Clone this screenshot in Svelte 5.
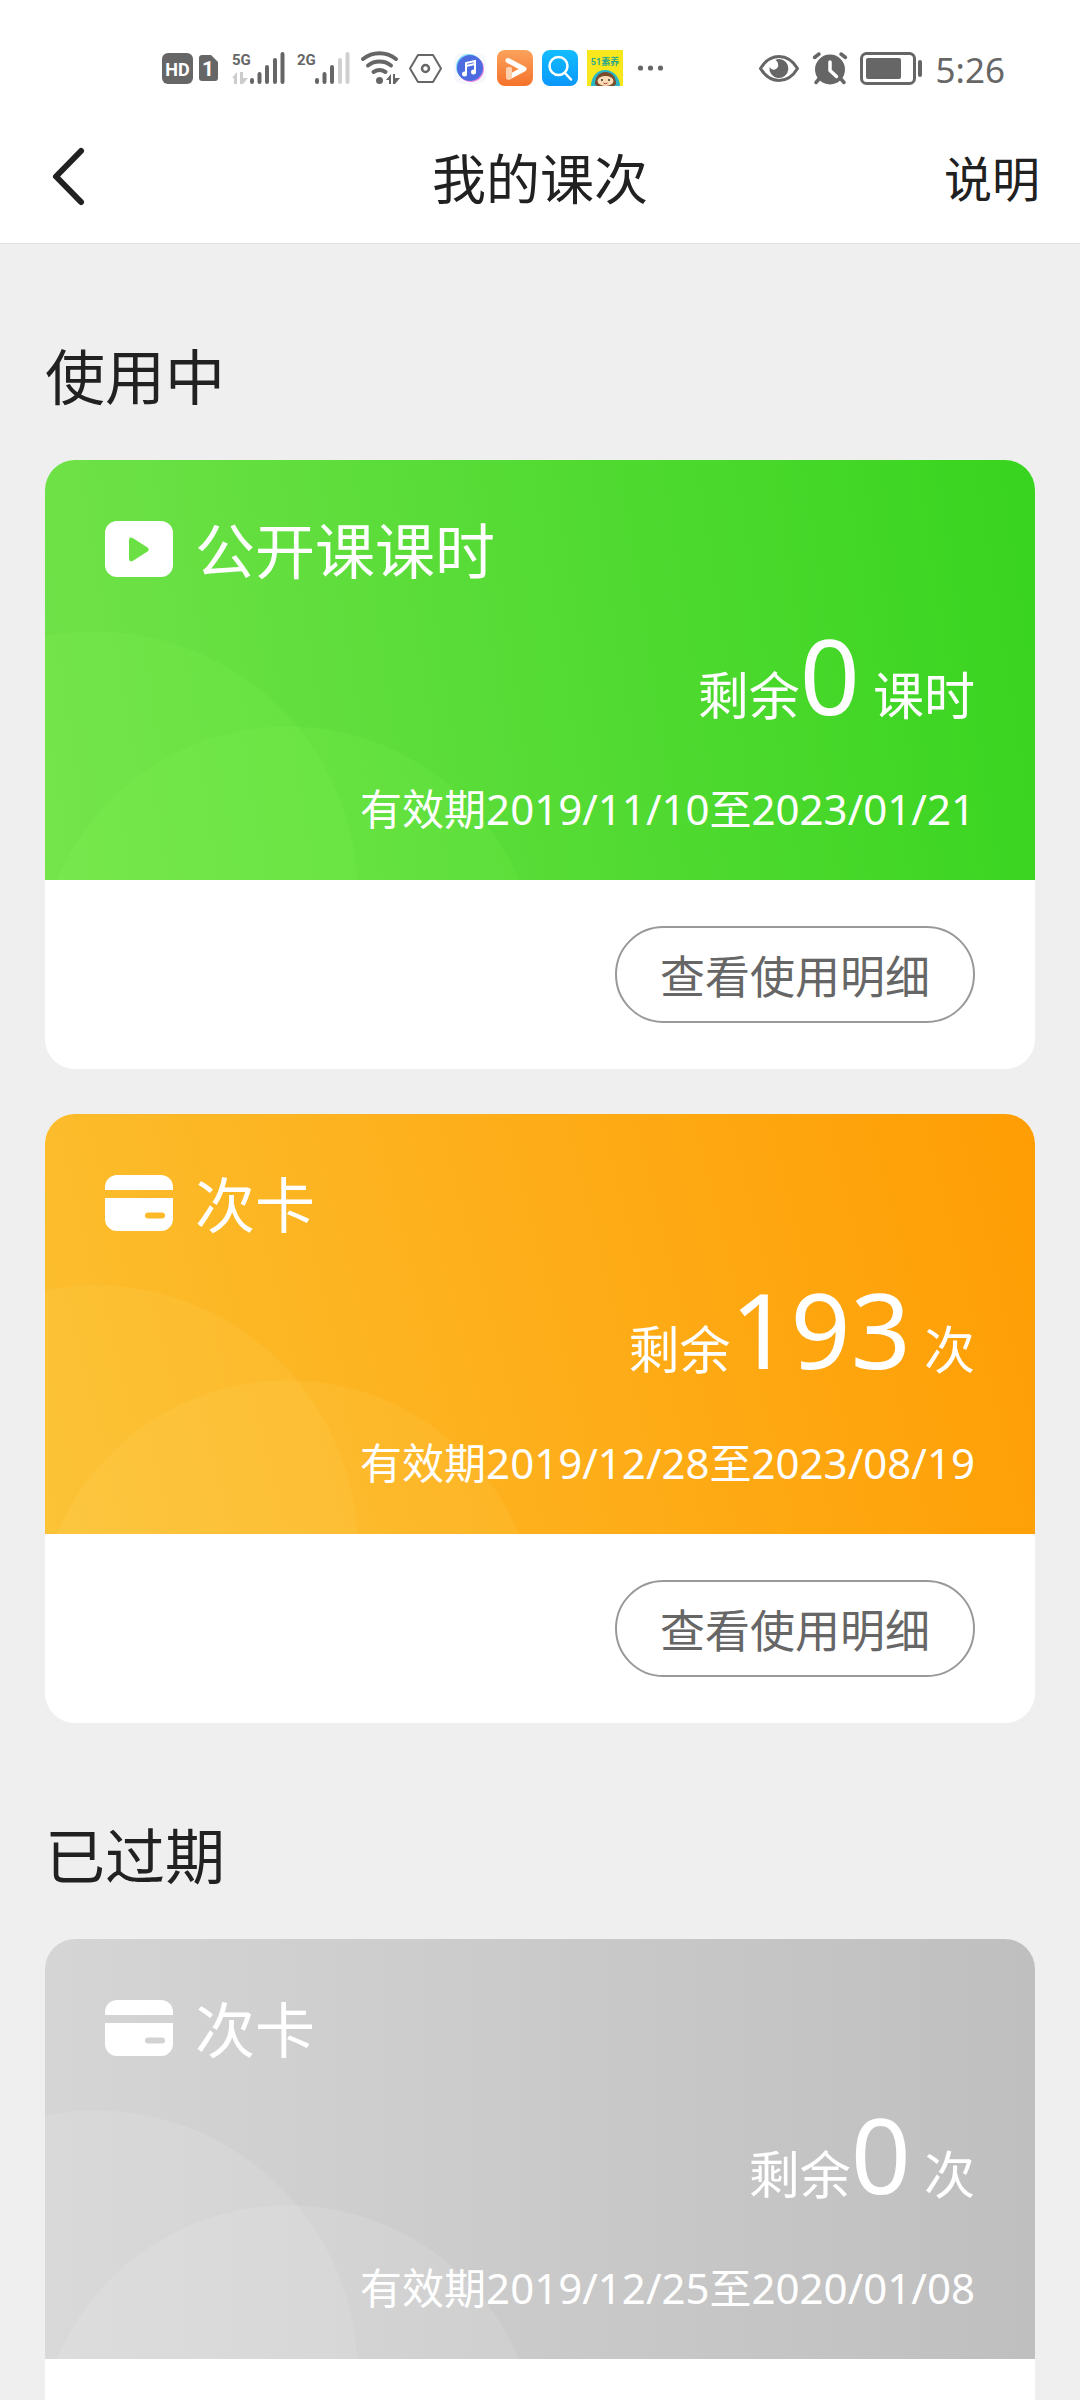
<script>
  const sections = [
    {
      title: '使用中',
      active: true,
      cards: [
        { theme: 'green', icon: 'video', name: '公开课课时', count: 0, unit: '课时', from: '2019/11/10', to: '2023/01/21' },
        { theme: 'orange', icon: 'card', name: '次卡', count: 193, unit: '次', from: '2019/12/28', to: '2023/08/19' }
      ]
    },
    {
      title: '已过期',
      active: false,
      cards: [
        { theme: 'gray', icon: 'card', name: '次卡', count: 0, unit: '次', from: '2019/12/25', to: '2020/01/08' }
      ]
    }
  ];
</script>

<div class="page">
  <header>
    <div class="status">
      <div class="status-group">
        <!-- HD -->
        <svg width="31" height="36" viewBox="0 0 31 36">
          <rect y="3" width="31" height="31" rx="6" fill="#666" />
          <text x="15.5" y="26" text-anchor="middle" font-size="18" font-weight="700" fill="#fff">HD</text>
        </svg>
        <!-- sim 1 -->
        <svg width="25" height="36" viewBox="0 0 25 36">
          <path d="M3 5h9l7 7v16a3 3 0 0 1-3 3H3a3 3 0 0 1-3-3V8a3 3 0 0 1 3-3z" fill="#666" />
          <text x="9" y="26" text-anchor="middle" font-size="21" font-weight="700" fill="#fff">1</text>
        </svg>
        <!-- 5G -->
        <svg width="58" height="36" viewBox="0 0 58 36">
          <text x="2" y="15" font-size="15" font-weight="700" fill="#666">5G</text>
          <path d="M2 28l5-6v12H4v-6zM10 22h3v6h5l-5 6h-3z" fill="#ccc" />
          <g stroke="#666" stroke-width="4" stroke-linecap="round">
            <path d="M22 30v2M29.500 24v8M37 17v15M45 10v22M52.500 4v28" />
          </g>
        </svg>
        <!-- 2G -->
        <svg width="57" height="36" viewBox="0 0 57 36">
          <text x="3" y="15" font-size="15" font-weight="700" fill="#666">2G</text>
          <g stroke="#666" stroke-width="4" stroke-linecap="round">
            <path d="M23 30v2M30.500 24v8M38 17v15" />
            <path d="M46 10v22M53.500 4v28" stroke="#d0d0d0" />
          </g>
        </svg>
        <!-- wifi -->
        <svg width="45" height="36" viewBox="0 0 45 36">
          <g fill="none" stroke="#666" stroke-width="4" stroke-linecap="round">
            <path d="M6 9a27 27 0 0 1 33 0" />
            <path d="M11 15.500a19 19 0 0 1 23 0" />
            <path d="M16.500 22a11 11 0 0 1 12 0" />
          </g>
          <circle cx="22.500" cy="30.500" r="3.500" fill="#666" />
          <path d="M29 30l5-6v10h-2v-4zM36 24h2v4h5l-5 6h-2z" fill="#666" />
        </svg>
        <!-- hexagon -->
        <svg width="35" height="36" viewBox="0 0 35 36">
          <g fill="none" stroke="#666" stroke-width="2">
            <path d="M10 5h15l8 13.500L25 32H10L2 18.500z" stroke-linejoin="round" />
            <circle cx="17.500" cy="18.500" r="3.500" stroke-width="2.500" />
          </g>
        </svg>
        <!-- music -->
        <svg width="40" height="36" viewBox="0 0 40 36">
          <rect x="5" y="3" width="32" height="31" rx="8" fill="#f7f8fb" />
          <circle cx="20" cy="17" r="13" fill="#7ddcf5" />
          <circle cx="22" cy="19" r="13" fill="#f08ae0" />
          <circle cx="21" cy="18" r="13" fill="#4c6be0" />
          <g stroke="#fff" stroke-width="2" fill="none">
            <path d="M17 24V13l9-2v11" />
            <path d="M17 16l9-2" />
          </g>
          <circle cx="15.500" cy="24" r="2.500" fill="#fff" />
          <circle cx="24.500" cy="22" r="2.500" fill="#fff" />
        </svg>
        <!-- video player -->
        <svg width="40" height="36" viewBox="0 0 40 36">
          <defs>
            <linearGradient id="player" x2="0" y2="1">
              <stop stop-color="#fba25c" />
              <stop offset="1" stop-color="#f5722b" />
            </linearGradient>
          </defs>
          <rect x="2" width="36" height="36" rx="8" fill="url(#player)" />
          <path d="M13 10.500L29 19 14 27" fill="none" stroke="#fff" stroke-width="5" stroke-linecap="round" stroke-linejoin="round" />
          <path d="M11 18q6-3 6 1v9q-6 4-6-1z" fill="#fdd0b0" />
        </svg>
        <!-- search -->
        <svg width="40" height="36" viewBox="0 0 40 36">
          <defs>
            <linearGradient id="search" x2="0" y2="1">
              <stop stop-color="#12bdfd" />
              <stop offset="1" stop-color="#0b97fb" />
            </linearGradient>
          </defs>
          <rect x="1" width="36" height="36" rx="8" fill="url(#search)" />
          <circle cx="17.500" cy="16" r="9" fill="none" stroke="#fff" stroke-width="2.500" />
          <path d="M24 23l6 6.500" stroke="#fff" stroke-width="2.500" stroke-linecap="round" />
        </svg>
        <!-- 51 -->
        <svg width="40" height="36" viewBox="0 0 40 36">
          <rect width="36" height="36" fill="#f8e71c" />
          <text x="18" y="15" text-anchor="middle" font-size="9" font-weight="700" fill="#2aa68c">51素养</text>
          <path d="M4 36c0-8 5-16 14-16s15 8 15 16z" fill="#29b5c8" />
          <path d="M8 34c0-7 4-12 10.500-12S29 27 29 34l-2 2H10z" fill="#7a4a2a" />
          <ellipse cx="18.500" cy="31" rx="8" ry="5" fill="#fcdcb4" />
          <circle cx="15" cy="30" r="1" fill="#333" />
          <circle cx="22" cy="30" r="1" fill="#333" />
          <path d="M16.500 33q2 1.500 4 0" fill="none" stroke="#a33" />
        </svg>
        <!-- more -->
        <svg width="35" height="36" viewBox="0 0 35 36">
          <g fill="#666">
            <circle cx="7.500" cy="18" r="2.600" />
            <circle cx="17.500" cy="18" r="2.600" />
            <circle cx="27.500" cy="18" r="2.600" />
          </g>
        </svg>
      </div>
      <div class="status-group right">
        <!-- eye -->
        <svg width="42" height="36" viewBox="0 0 42 36">
          <path d="M2.500 18.500C7 11 13 6.500 21 6.500S35 11 39.500 18.500C35 26 29 30.500 21 30.500S7 26 2.500 18.500z" fill="none" stroke="#666" stroke-width="3" stroke-linejoin="round" />
          <path d="M21 9a9.500 9.500 0 1 1-9.500 8q2 3.500 5.500 2.500 4-1.500 3-6-.5-2.500-2.500-3.500Q19 9 21 9z" fill="#666" />
        </svg>
        <!-- alarm -->
        <svg width="36" height="36" viewBox="0 0 36 36">
          <circle cx="18" cy="19.500" r="15" fill="#666" />
          <path d="M2.500 7.500L7 4M33.500 7.500L29 4M7 29l-3 3.500M29 29l3 3.500" stroke="#666" stroke-width="3.500" stroke-linecap="round" />
          <path d="M18 12v8.500l6.500 6" fill="none" stroke="#fff" stroke-width="3.500" stroke-linecap="round" stroke-linejoin="round" />
        </svg>
        <!-- battery -->
        <svg width="64" height="36" viewBox="0 0 64 36">
          <rect x="1.500" y="3.500" width="53" height="30" rx="5" fill="none" stroke="#666" stroke-width="3" />
          <rect x="6" y="8" width="35" height="21" rx="2" fill="#666" />
          <rect x="58" y="10" width="4" height="17" rx="2" fill="#666" />
        </svg>
        <time>5:26</time>
      </div>
    </div>
    <nav>
      <button class="back" aria-label="返回">
        <svg width="48" height="64" viewBox="0 0 48 64">
          <path d="M41 6L16 31.500 41 57" fill="none" stroke="#212121" stroke-width="6" stroke-linecap="round" stroke-linejoin="round" />
        </svg>
      </button>
      <h1>我的课次</h1>
      <a class="help" href="#help">说明</a>
    </nav>
  </header>

  <main>
    {#each sections as section}
      <section>
        <h2>{section.title}</h2>
        <div class="cards">
          {#each section.cards as card}
            <article class="card">
              <div class="banner {card.theme}">
                <div class="name">
                  {#if card.icon === 'video'}
                    <svg width="68" height="56" viewBox="0 0 68 56">
                      <path fill-rule="evenodd" fill="#fff" d="M12 0h44a12 12 0 0 1 12 12v32a12 12 0 0 1-12 12H12A12 12 0 0 1 0 44V12A12 12 0 0 1 12 0zM24 19v18q0 5 4.500 2.600l14-9q2.500-2.100 0-4.200l-14-9Q24 15 24 19z" />
                    </svg>
                  {:else}
                    <svg width="68" height="56" viewBox="0 0 68 56">
                      <path fill="#fff" d="M12 0h44a12 12 0 0 1 12 12v3H0v-3A12 12 0 0 1 12 0z" />
                      <path fill-rule="evenodd" fill="#fff" d="M0 23h68v21a12 12 0 0 1-12 12H12A12 12 0 0 1 0 44zM43 37.500a3 3 0 0 0 0 6h14a3 3 0 0 0 0-6z" />
                    </svg>
                  {/if}
                  <h3>{card.name}</h3>
                </div>
                <p class="count">剩余<strong>{card.count}</strong> {card.unit}</p>
                <p class="period">有效期{card.from}至{card.to}</p>
              </div>
              <div class="actions">
                {#if section.active}
                  <button class="detail">查看使用明细</button>
                {/if}
              </div>
            </article>
          {/each}
        </div>
      </section>
    {/each}
  </main>
</div>

<style>
  :global(body) {
    margin: 0;
    background: #efefef;
  }
  .page {
    display: flex;
    flex-direction: column;
    height: 100vh;
    font-family: "Noto Sans", "Noto Sans CJK SC", sans-serif;
    color: #212121;
  }
  h1, h2, h3, p {
    margin: 0;
    font-weight: 400;
  }
  svg {
    display: block;
    flex: none;
  }
  button {
    font: inherit;
    background: none;
    cursor: pointer;
  }
  header {
    flex: none;
    background: #fff;
    border-bottom: 1px solid #e0e0e0;
  }
  .status {
    display: flex;
    justify-content: space-between;
    padding: 50px 75px 24px 162px;
  }
  .status-group {
    display: flex;
    align-items: center;
    gap: 6px;
    height: 36px;
  }
  .status-group.right {
    gap: 12px;
  }
  .status text {
    font-family: Roboto, "Noto Sans CJK SC", sans-serif;
  }
  time {
    padding-top: 3px;
    font-size: 35px;
    line-height: 36px;
    color: #666;
  }
  nav {
    display: grid;
    grid-template-columns: 1fr auto 1fr;
    align-items: center;
    height: 133px;
    padding: 0 40px;
  }
  .back {
    justify-self: start;
    padding: 0;
    border: 0;
  }
  h1 {
    padding-top: 4px;
    font-size: 54px;
    line-height: 72px;
  }
  .help {
    justify-self: end;
    padding-top: 4px;
    font-size: 48px;
    line-height: 72px;
    color: inherit;
    text-decoration: none;
  }
  main {
    flex: 1;
    min-height: 0;
    overflow-y: auto;
    scrollbar-width: none;
    padding: 0 45px;
  }
  h2 {
    padding: 97px 0 47px;
    font-size: 60px;
    line-height: 72px;
  }
  .cards {
    display: flex;
    flex-direction: column;
    gap: 45px;
  }
  .card {
    border-radius: 30px;
    overflow: hidden;
    background: #fff;
  }
  .banner {
    padding: 61px 60px 41px;
    color: #fff;
    background:
      radial-gradient(circle at 50px 434px, var(--wave) 262px, transparent 263px),
      radial-gradient(circle at 243px 517px, var(--wave) 250px, transparent 251px),
      var(--fill);
  }
  .green {
    --wave: rgba(140, 255, 90, 0.11);
    --fill: linear-gradient(81deg, #72e24a, #38d41f);
  }
  .orange {
    --wave: rgba(255, 240, 150, 0.08);
    --fill: linear-gradient(76deg, #fcbf2f, #ff9d04);
  }
  .gray {
    --wave: rgba(255, 255, 255, 0.1);
    --fill: linear-gradient(90deg, #d5d5d5, #bfbfbf);
  }
  .name {
    display: flex;
    align-items: flex-start;
    gap: 22px;
  }
  h3 {
    font-size: 60px;
    line-height: 60px;
  }
  .count {
    margin-top: 34px;
    font-size: 51px;
    line-height: 51px;
    text-align: right;
  }
  .count strong {
    font-size: 105px;
    line-height: 120px;
    font-weight: 400;
  }
  .period {
    margin-top: 44px;
    font-size: 42px;
    line-height: 60px;
    text-align: right;
  }
  .actions {
    display: flex;
    justify-content: flex-end;
    min-height: 97px;
    padding: 46px 60px;
  }
  .detail {
    padding: 16px 43px 12px;
    border: 2px solid #999;
    border-radius: 49px;
    font-size: 45px;
    line-height: 65px;
    color: #666;
  }
</style>
